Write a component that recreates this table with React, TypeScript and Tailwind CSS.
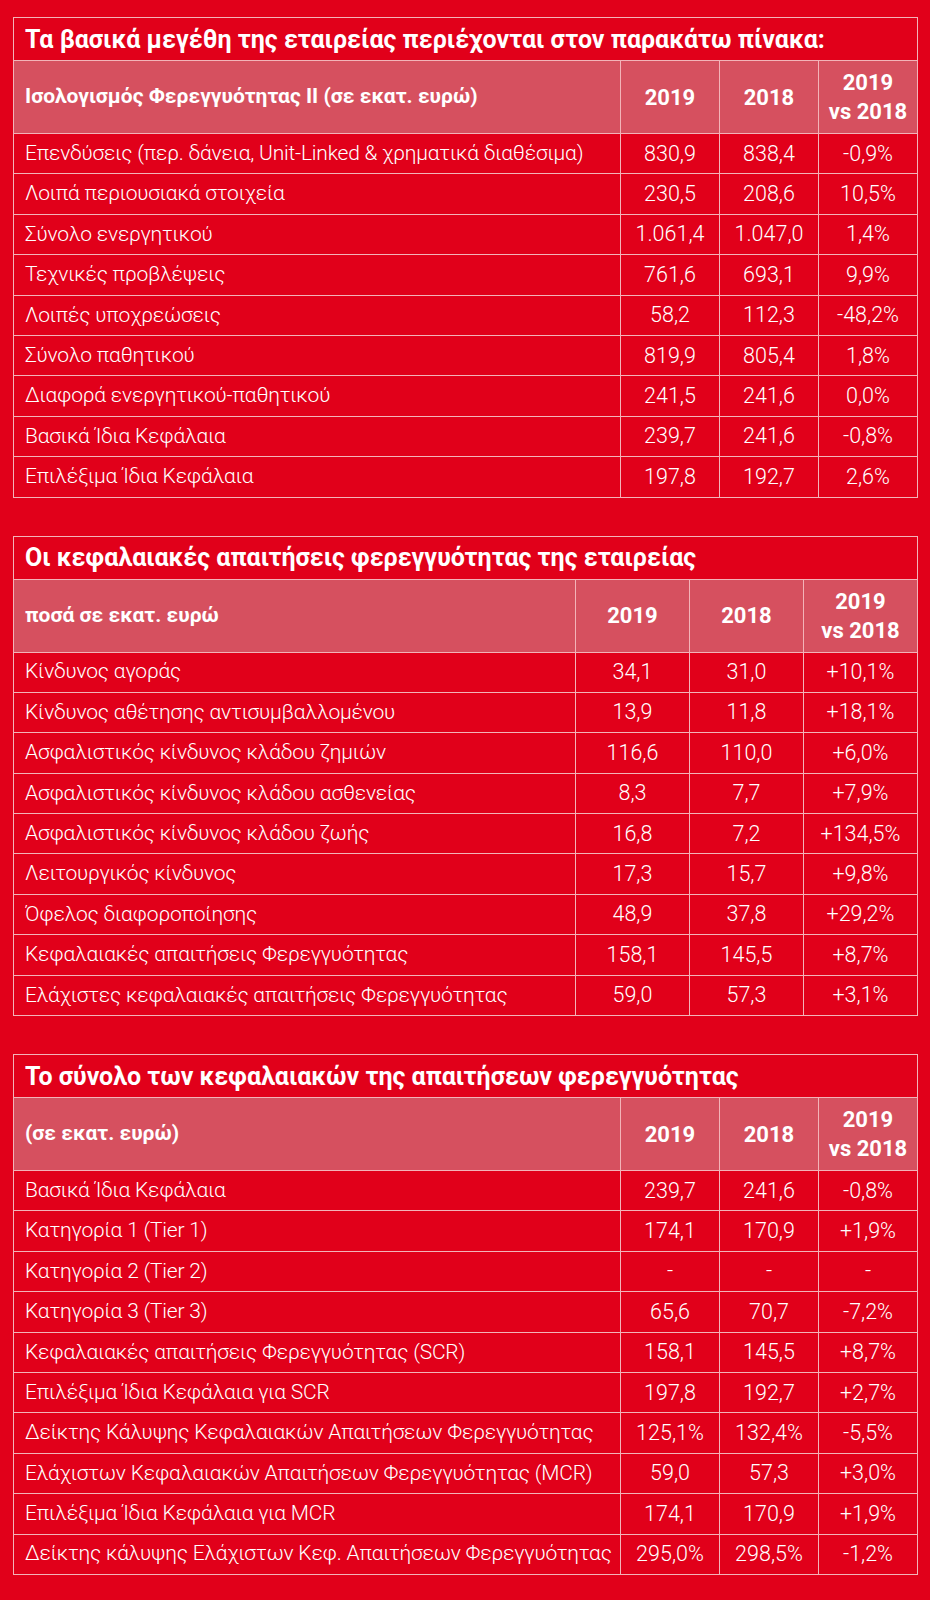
import React from 'react';

type Row = [string, string, string, string];

interface SolvencyTableProps {
  title: string;
  headLabel: string;
  valueCol: string;
  rows: Row[];
}

const balanceRows: Row[] = [
  ['Επενδύσεις (περ. δάνεια, Unit-Linked & χρηματικά διαθέσιμα)', '830,9', '838,4', '-0,9%'],
  ['Λοιπά περιουσιακά στοιχεία', '230,5', '208,6', '10,5%'],
  ['Σύνολο ενεργητικού', '1.061,4', '1.047,0', '1,4%'],
  ['Τεχνικές προβλέψεις', '761,6', '693,1', '9,9%'],
  ['Λοιπές υποχρεώσεις', '58,2', '112,3', '-48,2%'],
  ['Σύνολο παθητικού', '819,9', '805,4', '1,8%'],
  ['Διαφορά ενεργητικού-παθητικού', '241,5', '241,6', '0,0%'],
  ['Βασικά Ίδια Κεφάλαια', '239,7', '241,6', '-0,8%'],
  ['Επιλέξιμα Ίδια Κεφάλαια', '197,8', '192,7', '2,6%'],
];

const scrRows: Row[] = [
  ['Κίνδυνος αγοράς', '34,1', '31,0', '+10,1%'],
  ['Κίνδυνος αθέτησης αντισυμβαλλομένου', '13,9', '11,8', '+18,1%'],
  ['Ασφαλιστικός κίνδυνος κλάδου ζημιών', '116,6', '110,0', '+6,0%'],
  ['Ασφαλιστικός κίνδυνος κλάδου ασθενείας', '8,3', '7,7', '+7,9%'],
  ['Ασφαλιστικός κίνδυνος κλάδου ζωής', '16,8', '7,2', '+134,5%'],
  ['Λειτουργικός κίνδυνος', '17,3', '15,7', '+9,8%'],
  ['Όφελος διαφοροποίησης', '48,9', '37,8', '+29,2%'],
  ['Κεφαλαιακές απαιτήσεις Φερεγγυότητας', '158,1', '145,5', '+8,7%'],
  ['Ελάχιστες κεφαλαιακές απαιτήσεις Φερεγγυότητας', '59,0', '57,3', '+3,1%'],
];

const ownFundsRows: Row[] = [
  ['Βασικά Ίδια Κεφάλαια', '239,7', '241,6', '-0,8%'],
  ['Κατηγορία 1 (Tier 1)', '174,1', '170,9', '+1,9%'],
  ['Κατηγορία 2 (Tier 2)', '-', '-', '-'],
  ['Κατηγορία 3 (Tier 3)', '65,6', '70,7', '-7,2%'],
  ['Κεφαλαιακές απαιτήσεις Φερεγγυότητας (SCR)', '158,1', '145,5', '+8,7%'],
  ['Επιλέξιμα Ίδια Κεφάλαια για SCR', '197,8', '192,7', '+2,7%'],
  ['Δείκτης Κάλυψης Κεφαλαιακών Απαιτήσεων Φερεγγυότητας', '125,1%', '132,4%', '-5,5%'],
  ['Ελάχιστων Κεφαλαιακών Απαιτήσεων Φερεγγυότητας (MCR)', '59,0', '57,3', '+3,0%'],
  ['Επιλέξιμα Ίδια Κεφάλαια για MCR', '174,1', '170,9', '+1,9%'],
  ['Δείκτης κάλυψης Ελάχιστων Κεφ. Απαιτήσεων Φερεγγυότητας', '295,0%', '298,5%', '-1,2%'],
];

const cell = 'border-[1.5px] border-[#f3b3b8]';

const SolvencyTable: React.FC<SolvencyTableProps> = ({ title, headLabel, valueCol, rows }) => {
  return (
    <table className="w-full table-fixed border-collapse">
      <colgroup>
        <col />
        <col className={valueCol} />
        <col className={valueCol} />
        <col className={valueCol} />
      </colgroup>
      <tbody>
        {/* τίτλος */}
        <tr>
          <td colSpan={4} className={`${cell} h-[43px] px-[11px] text-[25px] font-bold leading-none whitespace-nowrap`}>
            {title}
          </td>
        </tr>
        {/* επικεφαλίδα */}
        <tr className="bg-[#d6505f]">
          <td className={`${cell} h-[73px] px-[11px] text-[21px] font-bold whitespace-nowrap`}>{headLabel}</td>
          <td className={`${cell} text-center text-[22px] font-bold`}>2019</td>
          <td className={`${cell} text-center text-[22px] font-bold`}>2018</td>
          <td className={`${cell} text-center text-[22px] font-bold leading-[29px]`}>
            2019
            <br />
            vs 2018
          </td>
        </tr>
        {rows.map((r, i) => (
          <tr key={i}>
            <td className={`${cell} h-[40.4px] px-[11px] text-[21px] tracking-[-0.2px] font-light whitespace-nowrap`}>
              {r[0]}
            </td>
            <td className={`${cell} text-center text-[21.5px] font-light`}>{r[1]}</td>
            <td className={`${cell} text-center text-[21.5px] font-light`}>{r[2]}</td>
            <td className={`${cell} text-center text-[21.5px] font-light`}>{r[3]}</td>
          </tr>
        ))}
      </tbody>
    </table>
  );
};

export default function App() {
  return (
    <div className="min-h-[1600px] bg-[#e1001a] px-[13px] pt-[17px] pb-6 text-white font-['Roboto',sans-serif]">
      <div className="flex flex-col gap-[38px] w-[905px]">
        <SolvencyTable
          title="Τα βασικά μεγέθη της εταιρείας περιέχονται στον παρακάτω πίνακα:"
          headLabel="Ισολογισμός Φερεγγυότητας ΙΙ (σε εκατ. ευρώ)"
          valueCol="w-[99px]"
          rows={balanceRows}
        />
        <SolvencyTable
          title="Οι κεφαλαιακές απαιτήσεις φερεγγυότητας της εταιρείας"
          headLabel="ποσά σε εκατ. ευρώ"
          valueCol="w-[114px]"
          rows={scrRows}
        />
        <SolvencyTable
          title="Το σύνολο των κεφαλαιακών της απαιτήσεων φερεγγυότητας"
          headLabel="(σε εκατ. ευρώ)"
          valueCol="w-[99px]"
          rows={ownFundsRows}
        />
      </div>
    </div>
  );
}
